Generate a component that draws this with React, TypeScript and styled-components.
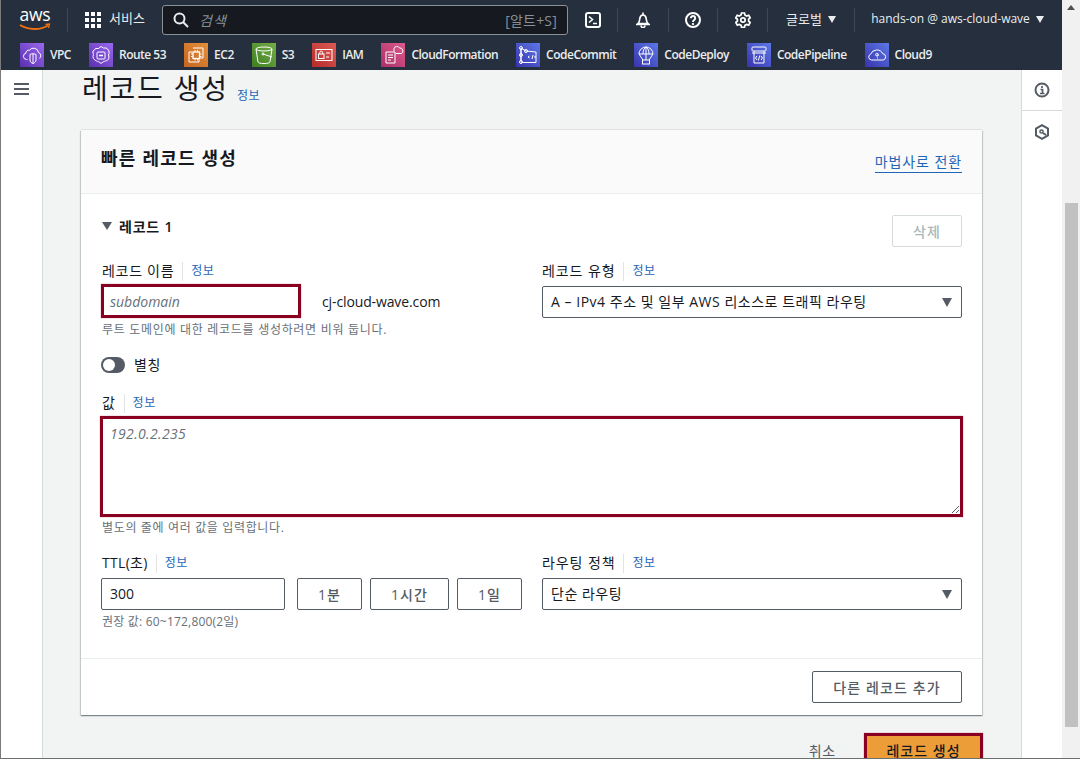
import React from 'react';
import styled, { createGlobalStyle } from 'styled-components';

const FONT = `"Open Sans", "Noto Sans CJK KR", "Noto Sans", sans-serif`;
const BLUE = '#1f66b8';

const Global = createGlobalStyle`
  html, body { margin: 0; padding: 0; background: #fff; overflow: hidden; }
  * { box-sizing: border-box; }
  body { font-family: ${FONT}; color: #16191f; }
`;

const Window = styled.div`
  width: 1080px; height: 759px; display: flex; overflow: hidden;
  border-left: 1px solid #7a7a7a; border-bottom: 1px solid #6e6e6e;
`;
const Viewport = styled.div`flex: 1; min-width: 0; display: flex; flex-direction: column;`;
const Scrollbar = styled.div`
  width: 18px; flex: none; background: #f1f1f1; display: flex; flex-direction: column; align-items: center; padding-top: 5px;
`;
const ScrollArrow = styled.div`
  width: 0; height: 0; border-left: 4px solid transparent; border-right: 4px solid transparent; border-bottom: 5px solid #505050;
`;
const ScrollThumb = styled.div`width: 13px; height: 524px; margin-top: 193px; background: #c1c1c1;`;

const Nav = styled.header`background: #262f3e; height: 70px; flex: none; display: flex; flex-direction: column;`;
const TopRow = styled.div`height: 40px; display: flex; align-items: center; color: #eaeded; font-size: 13px;`;
const LogoSlot = styled.div`width: 66px; padding-left: 16px; height: 100%; display: flex; align-items: center;`;
const NavSep = styled.span`width: 1px; height: 24px; background: #414750; flex: none;`;
const ServicesBtn = styled.div`
  display: flex; align-items: center; gap: 8px; padding-left: 17px; width: 94px; white-space: nowrap;
  font-size: 13px; line-height: 18px; margin-top: -4px; svg { margin-top: 4px; }
`;
const SearchBox = styled.div`
  width: 406px; height: 30px; background: #16191f; border: 1px solid #879196; border-radius: 3px;
  display: flex; align-items: center; padding: 0 10px 0 10px; font-size: 14px; color: #879196; flex: none;
`;
const SearchHint = styled.em`margin-left: 10px; flex: 1; font-style: italic; color: #879196; letter-spacing: 1px;`;
const Shortcut = styled.span`font-size: 14px; color: #879196; letter-spacing: .2px;`;
const IconBtn = styled.div<{ $w: number }>`
  width: ${p => p.$w}px; display: flex; justify-content: center; align-items: center; flex: none;
`;
const Menu = styled.div<{ $w: number; $small?: boolean }>`
  width: ${p => p.$w}px; display: flex; justify-content: center; align-items: center; gap: 5px; white-space: nowrap;
  flex: none; font-size: ${p => (p.$small ? 12 : 13)}px; font-weight: ${p => (p.$small ? 500 : 400)}; color: #eaeded; padding-bottom: 3px;
`;
const Caret = styled.span`
  width: 0; height: 0; border-left: 4.5px solid transparent; border-right: 4.5px solid transparent; border-top: 7px solid #eaeded; margin: 2px 0 0 1px;
`;
const Shortcuts = styled.div`height: 30px; display: flex; align-items: flex-start; padding: 3px 0 0 19px; gap: 18px;`;
const ShortcutItem = styled.div`
  display: flex; align-items: center; gap: 6px; height: 24px; color: #eaeded; font-size: 12px; font-weight: 600; white-space: nowrap; letter-spacing: -.5px;
`;
const ShortcutLabel = styled.span`margin-top: -2px;`;
const Tile = styled.span<{ $a: string; $b: string }>`
  width: 24px; height: 24px; flex: none; display: block;
  background: linear-gradient(45deg, ${p => p.$a}, ${p => p.$b});
  svg { display: block; }
`;

const Body = styled.div`flex: 1; min-height: 0; display: flex; overflow: hidden;`;
const LeftRail = styled.aside`
  width: 42px; flex: none; background: #fff; border-right: 1px solid #d5dbdb; padding: 13px 0 0 13px;
`;
const HamburgerBar = styled.span`display: block; width: 15px; height: 2px; background: #545b64; margin-bottom: 3px;`;
const RightRail = styled.aside`width: 41px; flex: none; background: #fff; border-left: 1px solid #d5dbdb; display: flex; flex-direction: column;`;
const RailCell = styled.div<{ $line?: boolean }>`
  height: ${p => (p.$line ? 41 : 42)}px; display: flex; align-items: center; justify-content: center;
  border-bottom: ${p => (p.$line ? '1px solid #d5dbdb' : '0')};
`;
const Main = styled.main`flex: 1; min-width: 0; background: #f2f3f3; padding: 0 39px 0 38px;`;
const TitleRow = styled.div`height: 36px; display: flex; align-items: center; gap: 8px; margin-left: 1px;`;
const Title = styled.h1`margin: 0; font-size: 28px; line-height: 36px; font-weight: 400; color: #16191f; white-space: nowrap; letter-spacing: 1.8px;`;
const InfoLink = styled.a<{ $drop?: number }>`
  font-size: 12px; line-height: 16px; color: ${BLUE}; margin-top: ${p => p.$drop ?? 0}px; white-space: nowrap; letter-spacing: .5px;
`;
const Card = styled.section`
  margin-top: 24px; background: #fff;
  box-shadow: 0 1px 1px 0 rgba(0,28,36,.3), 1px 1px 1px 0 rgba(0,28,36,.15), -1px 1px 1px 0 rgba(0,28,36,.15), 0 -1px 0 rgba(0,28,36,.08);
`;
const CardHead = styled.div`
  height: 64px; background: #fafafa; border-bottom: 1px solid #eaeded; padding: 0 20px;
  display: flex; justify-content: space-between; align-items: flex-start;
`;
const CardTitle = styled.h2`margin: 16px 0 0; font-size: 18px; line-height: 24px; font-weight: 700; color: #16191f; letter-spacing: 1.2px;`;
const WizardLink = styled.a`
  margin-top: 22px; font-size: 14px; line-height: 20px; color: ${BLUE}; border-bottom: 1px solid ${BLUE}; white-space: nowrap; letter-spacing: .9px;
`;
const CardBody = styled.div`padding: 21px 20px 28px;`;
const RecordHead = styled.div`display: flex; justify-content: space-between; align-items: flex-start; height: 32px;`;
const RecordName = styled.div`display: flex; align-items: center; gap: 7px; height: 22px; font-size: 14px; font-weight: 600; padding-left: 1px; letter-spacing: .8px;`;
const Tri = styled.span`width: 0; height: 0; border-left: 5.5px solid transparent; border-right: 5.5px solid transparent; border-top: 8px solid #545b64;`;
const Btn = styled.button<{ $w?: number; $disabled?: boolean }>`
  width: ${p => (p.$w ? `${p.$w}px` : 'auto')}; height: 32px; flex: none; padding: 0;
  background: #fff; border: 1px solid ${p => (p.$disabled ? '#d5dbdb' : '#545b64')}; border-radius: 2px;
  color: ${p => (p.$disabled ? '#aab7b8' : '#545b64')}; font-family: ${FONT}; font-size: 14px; font-weight: 500; letter-spacing: 1.1px;
`;
const TwoCol = styled.div<{ $top: number }>`
  display: grid; grid-template-columns: 421px 420px; column-gap: 20px; margin-top: ${p => p.$top}px;
`;
const Label = styled.div<{ $ls?: number; $flush?: boolean }>`
  height: 22px; padding-top: 2px; margin-bottom: 5px; display: flex; align-items: center; font-size: 14px; line-height: 20px; white-space: nowrap;
  padding-left: ${p => (p.$flush ? 0 : 1)}px; letter-spacing: ${p => p.$ls ?? .7}px;
`;
const LabelSep = styled.span`width: 1px; height: 19px; background: #e1e4e5; margin: 0 8px 0 8px;`;
const NameRow = styled.div`display: flex; align-items: center;`;
const Flagged = styled.div`
  border: 3px solid #8a0021; background: #fff; box-shadow: 0 0 1px rgba(138,0,33,.6);
  font-size: 14px; font-style: italic; color: #687078;
`;
const NameInput = styled(Flagged)`width: 200px; height: 34px; margin-top: -2px; padding: 0 6px; line-height: 30px;`;
const ValueInput = styled(Flagged)`
  width: 863px; height: 101px; margin-left: -1px; margin-top: -2px; padding: 5px 7px; line-height: 20px; position: relative; letter-spacing: .35px;
`;
const ResizeGrip = styled.svg`position: absolute; right: 0; bottom: 0;`;
const Domain = styled.span`font-size: 14px; margin-left: 21px; color: #16191f; line-height: 32px; letter-spacing: -.12px;`;
const Hint = styled.div<{ $ls?: number }>`
  font-size: 12px; height: 18px; line-height: 16px; padding-top: 2px; color: #687078; margin-top: 2px; padding-left: 1px;
  letter-spacing: ${p => p.$ls ?? .7}px; white-space: nowrap;
`;
const HintTight = styled(Hint)`margin-top: 1px;`;
const Select = styled.div`
  height: 32px; border: 1px solid #545b64; border-radius: 2px; background: #fff; padding: 0 9px 2px 8px;
  display: flex; align-items: center; justify-content: space-between; font-size: 14px; color: #16191f; white-space: nowrap; letter-spacing: .52px;
`;
const SelectTri = styled.span`width: 0; height: 0; border-left: 5.5px solid transparent; border-right: 5.5px solid transparent; border-top: 9px solid #545b64; margin-top: 2px;`;
const ToggleRow = styled.div`display: flex; align-items: center; gap: 9px; height: 20px; margin-top: 17px; font-size: 14px; letter-spacing: .6px;`;
const ToggleText = styled.span`margin-top: -2px;`;
const Toggle = styled.span`width: 24px; height: 16px; border-radius: 8px; background: #545b64; display: flex; align-items: center; padding-left: 2px;`;
const Knob = styled.span`width: 12px; height: 12px; border-radius: 50%; background: #fff;`;
const ValueField = styled.div`margin-top: 16px;`;
const TtlRow = styled.div`display: flex; gap: 8px;`;
const TtlInput = styled.div`
  width: 184px; height: 32px; margin-right: 4px; border: 1px solid #545b64; border-radius: 2px; padding: 0 8px; font-size: 14px; line-height: 30px; background: #fff;
`;
const CardFoot = styled.div`border-top: 1px solid #eaeded; padding: 12px 20px; display: flex; justify-content: flex-end;`;
const Actions = styled.div`display: flex; justify-content: flex-end; align-items: center; margin: 18px -1px 0 0; gap: 28px; height: 34px;`;
const Cancel = styled.span`font-size: 14px; color: #545b64; letter-spacing: .8px;`;
const Primary = styled.button`
  width: 119px; height: 34px; background: #ec9d38; border: 3px solid #8a0021; padding: 0; font-family: ${FONT};
  font-size: 14px; font-weight: 500; color: #16191f; box-shadow: 0 0 1px rgba(138,0,33,.6); letter-spacing: 1px;
`;

const S = (p: { children: React.ReactNode; w?: number; sw?: number; c?: string }) => (
  <svg width={p.w ?? 24} height={p.w ?? 24} viewBox={`0 0 ${p.w ?? 24} ${p.w ?? 24}`} fill="none" stroke={p.c ?? '#fff'} strokeWidth={p.sw ?? 1}>
    {p.children}
  </svg>
);

const PURPLE: [string, string] = ['#5a2fb0', '#9a68ee'];
const INDIGO: [string, string] = ['#3833ad', '#5c78e6'];

const tiles: { name: string; a: string; b: string; art: React.ReactNode }[] = [
  { name: 'VPC', a: PURPLE[0], b: PURPLE[1], art: <S><path d="M7.5 16.5h-1a3.2 3.2 0 0 1-.6-6.3 3 3 0 0 1 3.6-3 5 5 0 0 1 9 2.3 3.4 3.4 0 0 1 1 5.9" /><path d="M10 11.5a3.5 1.5 0 0 1 6 0v5.5c0 1.8-1.4 3-3 3.5-1.6-.5-3-1.7-3-3.5z" /><path d="M13 11v9" /></S> },
  { name: 'Route 53', a: PURPLE[0], b: PURPLE[1], art: <S><path d="M12 3.5l2.5 1.5h3l1 1.5 1.500 1v3l-.5 1.500.5 2c0 3-2 3.500-3.500 4-1.500.5-3 1-4.500 2.500-1.500-1.500-3-2-4.500-2.500C6 17 4 16.500 4 13.500l.5-2L4 10V8l1.500-1 1-1.500h3z" /><rect x="8" y="9" width="8" height="7" rx="1" /><path d="M10 12.500h4" strokeWidth={1.5} /></S> },
  { name: 'EC2', a: '#c4651f', b: '#e58f3c', art: <S><path d="M9 5h10v10h-3M8 9H5v10h10v-3" /><rect x="9" y="9" width="6.500" height="6.500" strokeWidth={1.3} /><path d="M11 7v2M13.500 7v2M11 15.500v2M13.500 15.500v2M7 11h2M7 13.500h2M15.500 11h2M15.500 13.500h2" /></S> },
  { name: 'S3', a: '#3f7f22', b: '#74ad47', art: <S><ellipse cx="12" cy="6" rx="8" ry="2" /><path d="M4 6l2 13c.5 1 2.500 1.500 6 1.500s5.500-.5 6-1.500l2-13" /><path d="M11 11l9 3" /><circle cx="11" cy="11" r="1" /></S> },
  { name: 'IAM', a: '#b62b2b', b: '#dd5b55', art: <S><rect x="4" y="6.500" width="16" height="11" /><rect x="6.500" y="11" width="5.500" height="4.500" /><path d="M7.800 11V9.500a1.400 1.400 0 0 1 2.800 0V11" /><path d="M14 10h4M14 14h3" /></S> },
  { name: 'CloudFormation', a: '#ac2f68', b: '#dc5b8e', art: <S><path d="M13 8V5.500a3 3 0 0 1 5.500-.5 3 3 0 0 1 2 5.500H15" /><path d="M5 9h9v11H5zM7 12h5M7 14.500h5M7 17h3" /></S> },
  { name: 'CodeCommit', a: INDIGO[0], b: INDIGO[1], art: <S><path d="M5 5l5 3 10 1v10.500H8L5 19z" /><circle cx="5" cy="5" r="1.500" /><circle cx="10" cy="8" r="1.500" /><circle cx="5" cy="12" r="1.500" /><circle cx="5" cy="19" r="1.500" /><path d="M5 6.500v11M13.500 15l-1.500-1 1.500-1M16 16l1-4M18.500 15l1-1-1-1" /></S> },
  { name: 'CodeDeploy', a: INDIGO[0], b: INDIGO[1], art: <S><path d="M5 11a7 7 0 0 1 14 0zM9 11c0-4 1.500-6.500 3-7 1.500.5 3 3 3 7M12 4v7" /><path d="M5 11l4 6M19 11l-4 6M12 11v6" /><rect x="8.500" y="17" width="7" height="4" /></S> },
  { name: 'CodePipeline', a: INDIGO[0], b: INDIGO[1], art: <S><rect x="5" y="4" width="14" height="4" rx="1" /><path d="M7 8v12h10V8M5 10h14" /><path d="M10 13l-1.500 2 1.500 2M14 13l1.500 2-1.500 2M12.800 12.500l-1.500 5" /></S> },
  { name: 'Cloud9', a: INDIGO[0], b: INDIGO[1], art: <S><path d="M6.500 17a3 3 0 0 1-.8-5.800 6.500 6.500 0 0 1 12-.5 3.200 3.200 0 0 1 .500 6.300z" /><path d="M13 12.500a1.300 1.300 0 1 0-1 .5h1v-2M12 15h1" /></S> },
];

const AwsLogo = () => (
  <svg width="36" height="26" viewBox="0 0 36 26" fill="none">
    <text x="18" y="14" textAnchor="middle" fill="#fff" fontSize="17.5" fontWeight="500" fontFamily="'Open Sans', sans-serif" letterSpacing="-.2">aws</text>
    <path d="M3 18c8 5 20 5.500 28 .5" stroke="#ec7211" strokeWidth="1.800" />
    <path d="M28.500 17.500l4-.5-1 4" stroke="#ec7211" strokeWidth="1.300" />
  </svg>
);
const GridIcon = () => (
  <svg width="16" height="16" viewBox="0 0 16 16" fill="#fff">
    {[0, 6, 12].flatMap(y => [0, 6, 12].map(x => <rect key={`${x}-${y}`} x={x} y={y} width="4" height="4" />))}
  </svg>
);

export default function App() {
  return (
    <>
      <Global />
      <Window>
        <Viewport>
          <Nav>
            <TopRow>
              <LogoSlot><AwsLogo /></LogoSlot>
              <NavSep />
              <ServicesBtn><GridIcon />서비스</ServicesBtn>
              <SearchBox>
                <svg width="16" height="16" viewBox="0 0 16 16" fill="none" stroke="#eaeded" strokeWidth="2"><circle cx="6.500" cy="6.500" r="5" /><path d="M10 10l5 5" /></svg>
                <SearchHint>검색</SearchHint>
                <Shortcut>[알트+S]</Shortcut>
              </SearchBox>
              <IconBtn $w={49}>
                <S w={16} sw={2}><rect x="1" y="1" width="14" height="14" rx="2" /><path d="M4 4.500l3.500 3L4 10.500M8 11.500h4" strokeWidth={1.6} /></S>
              </IconBtn>
              <NavSep />
              <IconBtn $w={50}>
                <S w={16} sw={1.6}><path d="M8 .5v2.500M3 11.500c1.800-1.800 1.500-3.500 1.800-5C5.200 4.200 6.500 3 8 3s2.800 1.200 3.200 3.500c.3 1.500 0 3.200 1.800 5zM1 12.500h14" /><path d="M6 13.500a2 2 0 0 0 4 0" /></S>
              </IconBtn>
              <NavSep />
              <IconBtn $w={48}>
                <S w={16} sw={2}><circle cx="8" cy="8" r="7" /><path d="M5.800 6.200a2.200 2.200 0 1 1 3.400 1.800C8.300 8.600 8 9 8 10" /><path d="M8 11v2" strokeWidth={1.8} /></S>
              </IconBtn>
              <NavSep />
              <IconBtn $w={49}>
                <S w={16} sw={2}><path d="M6.500 1h3l.4 2 1.800 1 2-.7 1.500 2.600-1.600 1.300v2l1.600 1.300-1.500 2.600-2-.7-1.800 1-.4 2h-3l-.4-2-1.800-1-2 .7-1.500-2.600 1.600-1.300v-2L.7 5.900l1.500-2.600 2 .7 1.800-1z" strokeWidth={1.7} /><circle cx="8" cy="8" r="2.200" strokeWidth={1.7} /></S>
              </IconBtn>
              <NavSep />
              <Menu $w={86}>글로벌<Caret /></Menu>
              <NavSep />
              <Menu $w={205} $small>hands-on @ aws-cloud-wave<Caret /></Menu>
            </TopRow>
            <Shortcuts>
              {tiles.map(t => (
                <ShortcutItem key={t.name}>
                  <Tile $a={t.a} $b={t.b}>{t.art}</Tile>
                  <ShortcutLabel>{t.name}</ShortcutLabel>
                </ShortcutItem>
              ))}
            </Shortcuts>
          </Nav>
          <Body>
            <LeftRail>
              <HamburgerBar /><HamburgerBar /><HamburgerBar />
            </LeftRail>
            <Main>
              <TitleRow>
                <Title>레코드 생성</Title>
                <InfoLink $drop={16}>정보</InfoLink>
              </TitleRow>
              <Card>
                <CardHead>
                  <CardTitle>빠른 레코드 생성</CardTitle>
                  <WizardLink>마법사로 전환</WizardLink>
                </CardHead>
                <CardBody>
                  <RecordHead>
                    <RecordName><Tri />레코드 1</RecordName>
                    <Btn $w={70} $disabled>삭제</Btn>
                  </RecordHead>
                  <TwoCol $top={12}>
                    <div>
                      <Label>레코드 이름<LabelSep /><InfoLink>정보</InfoLink></Label>
                      <NameRow>
                        <NameInput>subdomain</NameInput>
                        <Domain>cj-cloud-wave.com</Domain>
                      </NameRow>
                      <Hint>루트 도메인에 대한 레코드를 생성하려면 비워 둡니다.</Hint>
                    </div>
                    <div>
                      <Label $flush $ls={.9}>레코드 유형<LabelSep /><InfoLink>정보</InfoLink></Label>
                      <Select>A – IPv4 주소 및 일부 AWS 리소스로 트래픽 라우팅<SelectTri /></Select>
                    </div>
                  </TwoCol>
                  <ToggleRow><Toggle><Knob /></Toggle><ToggleText>별칭</ToggleText></ToggleRow>
                  <ValueField>
                    <Label>값<LabelSep /><InfoLink>정보</InfoLink></Label>
                    <ValueInput>
                      192.0.2.235
                      <ResizeGrip width="9" height="9" viewBox="0 0 9 9" fill="none" stroke="#545b64"><path d="M1 8l7-7M5 8l3-3" /></ResizeGrip>
                    </ValueInput>
                    <HintTight $ls={.65}>별도의 줄에 여러 값을 입력합니다.</HintTight>
                  </ValueField>
                  <TwoCol $top={15}>
                    <div>
                      <Label $ls={.3}>TTL(초)<LabelSep /><InfoLink>정보</InfoLink></Label>
                      <TtlRow>
                        <TtlInput>300</TtlInput>
                        <Btn $w={65}>1분</Btn>
                        <Btn $w={79}>1시간</Btn>
                        <Btn $w={65}>1일</Btn>
                      </TtlRow>
                      <Hint $ls={.2}>권장 값: 60~172,800(2일)</Hint>
                    </div>
                    <div>
                      <Label $flush $ls={.9}>라우팅 정책<LabelSep /><InfoLink>정보</InfoLink></Label>
                      <Select>단순 라우팅<SelectTri /></Select>
                    </div>
                  </TwoCol>
                </CardBody>
                <CardFoot><Btn $w={150}>다른 레코드 추가</Btn></CardFoot>
              </Card>
              <Actions>
                <Cancel>취소</Cancel>
                <Primary>레코드 생성</Primary>
              </Actions>
            </Main>
            <RightRail>
              <RailCell $line>
                <S w={16} sw={2} c="#545b64"><circle cx="8" cy="8" r="6.500" /><path d="M8 4v2M6.500 7.500H8.500V11.500M6 11.500h4.500" strokeWidth={1.7} /></S>
              </RailCell>
              <RailCell>
                <S w={16} sw={2} c="#545b64"><path d="M8 1.200l6 3.400v6.800l-6 3.400-6-3.400V4.600z" /><circle cx="7.500" cy="7.500" r="1.600" strokeWidth={1.5} /><path d="M9 9l3 2" /></S>
              </RailCell>
            </RightRail>
          </Body>
        </Viewport>
        <Scrollbar>
          <ScrollArrow />
          <ScrollThumb />
        </Scrollbar>
      </Window>
    </>
  );
}
